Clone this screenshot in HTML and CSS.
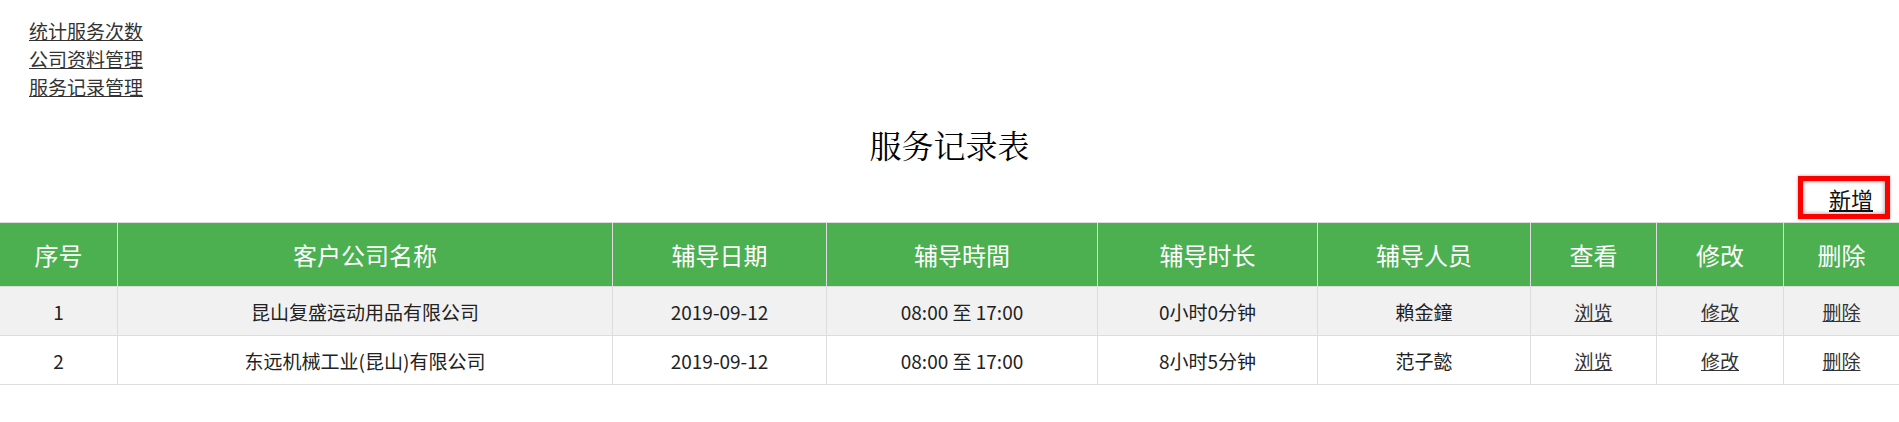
FILE: index.html
```html
<!DOCTYPE html>
<html lang="zh-CN">
<head>
<meta charset="utf-8">
<title>服务记录表</title>
<link rel="stylesheet" href="styles.css">
</head>
<body>
<nav class="nav">
  <a href="#">统计服务次数</a>
  <a href="#">公司资料管理</a>
  <a href="#">服务记录管理</a>
</nav>
<h1 class="title">服务记录表</h1>
<div class="toolbar">
  <span class="highlight"><a href="#" class="add-link">新增</a></span>
</div>
<table class="records">
  <thead>
    <tr>
      <th class="c-no">序号</th>
      <th class="c-company">客户公司名称</th>
      <th class="c-date">辅导日期</th>
      <th class="c-time">辅导時間</th>
      <th class="c-dur">辅导时长</th>
      <th class="c-staff">辅导人员</th>
      <th class="c-view">查看</th>
      <th class="c-edit">修改</th>
      <th class="c-del">删除</th>
    </tr>
  </thead>
  <tbody>
    <tr>
      <td>1</td>
      <td>昆山复盛运动用品有限公司</td>
      <td>2019-09-12</td>
      <td>08:00 至 17:00</td>
      <td>0小时0分钟</td>
      <td>賴金鐘</td>
      <td><a href="#">浏览</a></td>
      <td><a href="#">修改</a></td>
      <td><a href="#">删除</a></td>
    </tr>
    <tr>
      <td>2</td>
      <td>东远机械工业(昆山)有限公司</td>
      <td>2019-09-12</td>
      <td>08:00 至 17:00</td>
      <td>8小时5分钟</td>
      <td>范子懿</td>
      <td><a href="#">浏览</a></td>
      <td><a href="#">修改</a></td>
      <td><a href="#">删除</a></td>
    </tr>
  </tbody>
</table>
</body>
</html>
```

FILE: styles.css
```css
html, body {
  margin: 0;
  padding: 0;
  background: #fff;
}
body {
  font-family: "Noto Sans CJK SC", "Noto Sans", sans-serif;
  color: #222;
}
a {
  color: #333;
  text-decoration: underline;
}
.nav {
  display: flex;
  flex-direction: column;
  align-items: flex-start;
  padding: 17px 0 0 29px;
}
.nav a {
  font-size: 19px;
  line-height: 28px;
}
.title {
  margin: 23px 0 0;
  text-align: center;
  font-family: "Noto Serif CJK SC", "Noto Sans CJK SC", serif;
  font-weight: normal;
  font-size: 32px;
  line-height: 40px;
  color: #000;
}
.toolbar {
  display: flex;
  justify-content: flex-end;
  margin-top: 12px;
  margin-bottom: 3px;
  padding-right: 9px;
}
.highlight {
  display: inline-flex;
  align-items: center;
  height: 33px;
  padding: 0 12px 0 26px;
  border: 5px solid #f00;
  box-shadow: inset 0 0 4px rgba(0,0,0,0.45), 0 0 3px rgba(0,0,0,0.35);
}
.add-link {
  font-size: 22px;
  line-height: 26px;
  color: #111;
}
.records {
  width: 100%;
  border-collapse: collapse;
  table-layout: fixed;
}
.records th,
.records td {
  border: 1px solid #ddd;
  text-align: center;
  padding: 0;
}
.records th:first-child,
.records td:first-child {
  border-left: none;
}
.records th:last-child,
.records td:last-child {
  border-right: none;
}
.records th {
  background: #4caf50;
  color: #fff;
  font-weight: normal;
  font-size: 24px;
  height: 63px;
}
.records td {
  font-size: 19px;
  height: 48px;
  color: #222;
}
.records tbody tr:nth-child(odd) td {
  background: #f1f1f1;
}
.c-no { width: 117px; }
.c-company { width: 494px; }
.c-date { width: 213px; }
.c-time { width: 270px; }
.c-dur { width: 219px; }
.c-staff { width: 212px; }
.c-view { width: 125px; }
.c-edit { width: 126px; }
.c-del { width: auto; }
```
